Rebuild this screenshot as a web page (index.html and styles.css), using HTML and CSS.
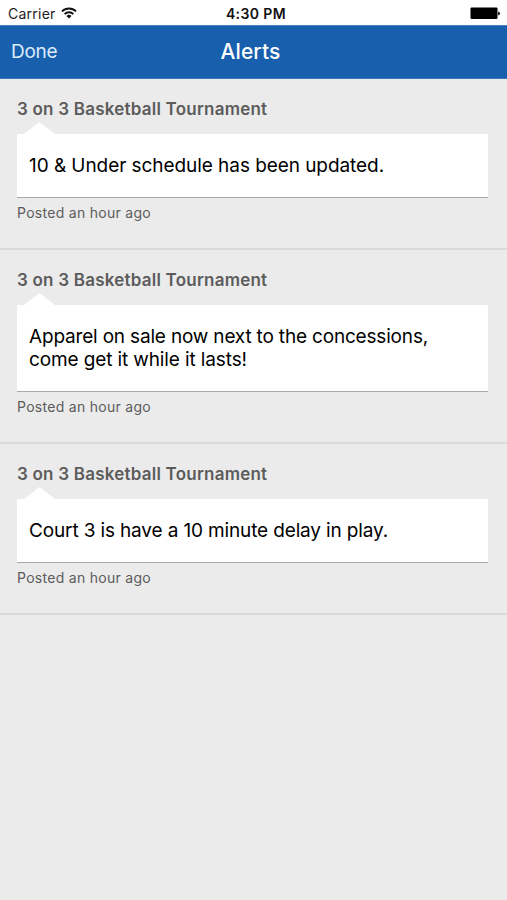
FILE: index.html
```html
<!DOCTYPE html>
<html lang="en">
<head>
<meta charset="utf-8">
<title>Alerts</title>
<link rel="stylesheet" href="styles.css">
</head>
<body>
<div class="status">
  <div class="carrier"><span class="carrier-name">Carrier</span>
    <svg class="wifi" viewBox="0 0 16 12"><path d="M1 4.4a10 10 0 0 1 14 0" /><path d="M3.6 7.1a6.3 6.3 0 0 1 8.8 0" /><path class="dot" d="M5.5 9a3.6 3.6 0 0 1 5 0L8 11.6z"/></svg>
  </div>
  <span class="time">4:30 PM</span>
  <svg class="battery" viewBox="0 0 30 12"><rect x=".5" y=".5" width="27" height="11.4" rx="1"/><path d="M28.2 4.4q1.8 .5 1.8 2t-1.8 2z"/></svg>
</div>
<header class="nav"><span class="done">Done</span><h1 class="title">Alerts</h1></header>
<main>
  <section class="alert">
    <h2 class="event">3 on 3 Basketball Tournament</h2>
    <p class="bubble"><span class="line l1">10 &amp; Under schedule has been updated.</span></p>
    <p class="posted">Posted an hour ago</p>
  </section>
  <section class="alert">
    <h2 class="event">3 on 3 Basketball Tournament</h2>
    <p class="bubble"><span class="line l2">Apparel on sale now next to the concessions,</span><span class="line l3">come get it while it lasts!</span></p>
    <p class="posted">Posted an hour ago</p>
  </section>
  <section class="alert">
    <h2 class="event">3 on 3 Basketball Tournament</h2>
    <p class="bubble"><span class="line l4">Court 3 is have a 10 minute delay in play.</span></p>
    <p class="posted">Posted an hour ago</p>
  </section>
</main>
</body>
</html>
```
FILE: styles.css
```css
* { box-sizing: border-box; margin: 0; padding: 0; }
body { width: 507px; height: 900px; background: #ebebeb; color: #000; font-family: Inter, "Liberation Sans", sans-serif; overflow: hidden; }
.status { height: 25px; background: #fff; display: grid; grid-template-columns: 1fr auto 1fr; align-items: center; padding: 1px 7px 0 8px; }
.carrier { display: flex; align-items: center; gap: 5px; }
.carrier-name { font-size: 14px; line-height: 22px; letter-spacing: .24px; padding-top: 2px; color: #222; }
.wifi { width: 16px; height: 12px; fill: none; stroke: #111; stroke-width: 1.9; }
.wifi .dot { fill: #111; stroke: none; }
.time { font-size: 14px; font-weight: 600; line-height: 22px; letter-spacing: .4px; padding: 2px 0 0 4px; color: #111; }
.battery { width: 30px; height: 12px; justify-self: end; }
.nav { height: 54px; background: #1860ae; border-top: 1px solid #4a82be; border-bottom: 1px solid #3f78b5; color: #fff; display: grid; grid-template-columns: 1fr auto 1fr; align-items: center; padding: 0 14px 0 11px; }
.done { font-size: 19px; line-height: 50px; letter-spacing: -.25px; color: #dceafa; margin-top: -1px; }
.title { font-size: 21px; font-weight: 450; line-height: 50px; letter-spacing: .15px; margin: -1px 3px 0 0; }
.alert { padding: 18px 19px 0 17px; height: 171px; border-bottom: 2px solid #dadada; }
.alert:nth-child(2) { height: 194px; }
.event { font-size: 17px; font-weight: 600; line-height: 24px; letter-spacing: .22px; color: #5c5c5c; }
.bubble { position: relative; margin-top: 13px; background: #fff; border-bottom: 1px solid #a9a9a9; padding: 20px 12px; font-size: 19px; line-height: 23px; }
.bubble::before { content: ""; position: absolute; left: 7px; top: -12px; width: 31px; height: 12px; background: #fff; clip-path: polygon(50% 0, 100% 100%, 0 100%); }
.line { display: block; white-space: nowrap; }
.l1 { letter-spacing: -.06px; }
.l2 { letter-spacing: -.18px; }
.l3 { letter-spacing: -.12px; }
.l4 { letter-spacing: -.14px; }
.posted { font-size: 14px; line-height: 20px; letter-spacing: .29px; margin-top: 5px; color: #5c5c5c; }
```
